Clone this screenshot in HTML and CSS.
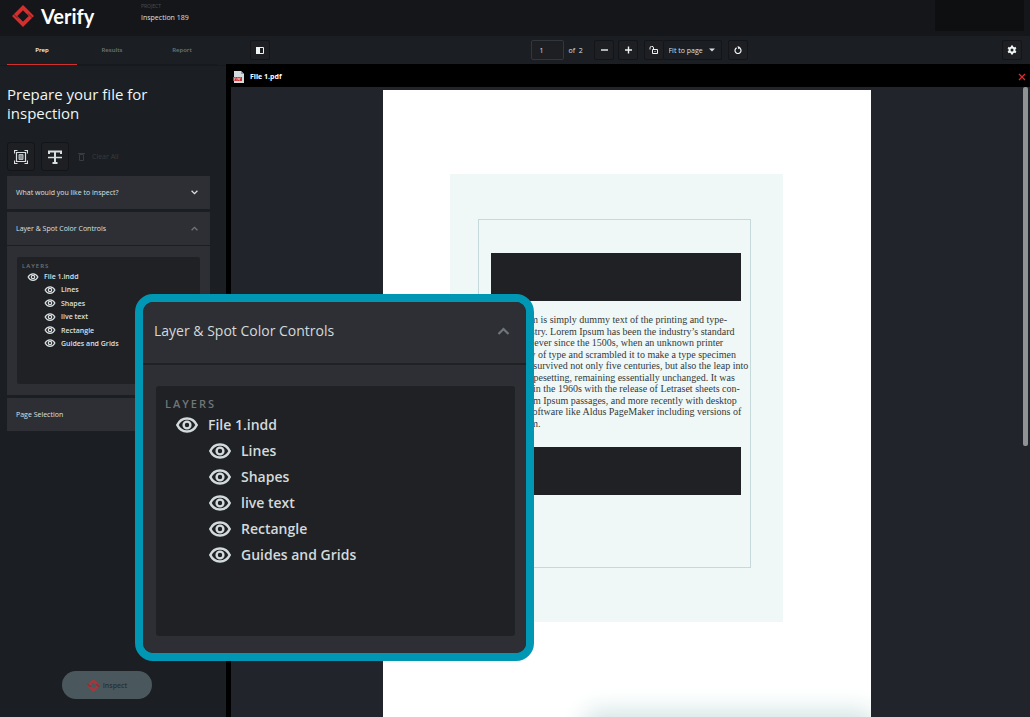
FILE: index.html
```html
<!DOCTYPE html>
<html lang="en">
<head>
<meta charset="utf-8">
<meta name="viewport" content="width=device-width, initial-scale=1">
<title>Verify</title>
<link rel="stylesheet" href="styles.css">
</head>
<body>
<svg class="defs" aria-hidden="true">
  <symbol id="eye" viewBox="0 0 22 16">
    <path d="M1.300 8C3.200 4 6.700 1.500 11 1.500S18.800 4 20.700 8C18.800 12 15.300 14.500 11 14.500S3.200 12 1.300 8Z" fill="none" stroke="currentColor" stroke-width="2.500"/>
    <circle cx="11" cy="8" r="3.400" fill="none" stroke="currentColor" stroke-width="2.400"/>
  </symbol>
  <symbol id="diamond" viewBox="0 0 22 22">
    <path d="M11 2.700 19.300 11 11 19.300 2.700 11Z" fill="none" stroke="currentColor" stroke-width="3.800"/>
    <path d="M1 8.500 6 13.500M16 8.500 21 13.500" stroke="#16171a" stroke-width="0.600"/>
  </symbol>
  <symbol id="up" viewBox="0 0 12 8"><path d="M1 7 6 2 11 7" fill="none" stroke="currentColor" stroke-width="2.200"/></symbol>
</svg>
<div class="app">
  <header class="header">
    <div class="brand"><svg class="brand-mark"><use href="#diamond"/></svg><span>Verify</span></div>
    <div class="project"><span class="project-label">PROJECT</span><span class="project-name">Inspection 189</span></div>
    <div class="account"></div>
  </header>

  <aside class="sidebar">
    <nav class="tabs">
      <a class="tab tab-active" href="#prep">Prep</a>
      <a class="tab" href="#results">Results</a>
      <a class="tab" href="#report">Report</a>
    </nav>
    <h1 class="title">Prepare your file for inspection</h1>
    <div class="tools">
      <button class="tool" aria-label="Select area">
        <svg viewBox="0 0 14 14" width="14" height="14" fill="none" stroke="currentColor"><path d="M.5 3.500V.5H3.500M10.500.5H13.500V3.500M13.500 10.500V13.500H10.500M3.500 13.500H.5V10.500" stroke-width="1.200"/><path d="M2.500 2.500H11.500V11.500H2.500Z" stroke-width="1.200"/><path d="M5 4.500H9V9.500H5Z" fill="#8d9496" stroke="#b4babb"/></svg>
      </button>
      <button class="tool" aria-label="Select text">
        <svg viewBox="0 0 14 14" width="14" height="14" fill="none" stroke="currentColor"><path d="M1 4V1.500H13V4M7 1.500V13M4.500 13H9.500" stroke-width="2"/><path d="M0 7.500H14" stroke-width="1.500"/></svg>
      </button>
      <button class="clear"><svg viewBox="0 0 7 9" width="7" height="9" fill="none" stroke="currentColor"><path d="M1.500 2.500H5.500V8.500H1.500ZM0 1.500H7"/></svg>Clear All</button>
    </div>

    <div class="accordion">
      <button class="fold">What would you like to inspect?<svg class="chevron chevron-down"><use href="#up"/></svg></button>
      <section class="fold-open">
        <button class="fold">Layer &amp; Spot Color Controls<svg class="chevron chevron-dim"><use href="#up"/></svg></button>
        <div class="fold-body">
          <div class="layers">
            <h2 class="layers-title">LAYERS</h2>
            <ul class="tree">
              <li class="node"><svg class="eye"><use href="#eye"/></svg>File 1.indd</li>
              <li class="node node-child"><svg class="eye"><use href="#eye"/></svg>Lines</li>
              <li class="node node-child"><svg class="eye"><use href="#eye"/></svg>Shapes</li>
              <li class="node node-child"><svg class="eye"><use href="#eye"/></svg>live text</li>
              <li class="node node-child"><svg class="eye"><use href="#eye"/></svg>Rectangle</li>
              <li class="node node-child"><svg class="eye"><use href="#eye"/></svg>Guides and Grids</li>
            </ul>
          </div>
        </div>
      </section>
      <button class="fold">Page Selection</button>
    </div>
    <button class="inspect"><svg class="inspect-mark"><use href="#diamond"/></svg>Inspect</button>
  </aside>

  <main class="main">
    <div class="toolbar">
      <button class="icon-button" aria-label="Toggle sidebar"><svg viewBox="0 0 8 7" width="8" height="7"><path d="M.5.5H7.500V6.500H.5Z" fill="none" stroke="currentColor"/><path d="M0 0H4V7H0Z" fill="currentColor"/></svg></button>
      <div class="controls">
        <label class="pager"><input class="page-input" type="text" value="1" aria-label="Page"><span>of&nbsp; 2</span></label>
        <div class="zoom-buttons">
          <button class="icon-button" aria-label="Zoom out"><svg viewBox="0 0 8 8" width="8" height="8"><path d="M1 4H8" stroke="currentColor" stroke-width="1.400"/></svg></button>
          <button class="icon-button" aria-label="Zoom in"><svg viewBox="0 0 8 8" width="8" height="8"><path d="M1 4H8M4.500.5V7.500" stroke="currentColor" stroke-width="1.400"/></svg></button>
        </div>
        <div class="fit">
          <button class="icon-button" aria-label="Unlock zoom"><svg viewBox="0 0 9 8" width="9" height="8" fill="none" stroke="currentColor"><path d="M3.500 3.500H8.500V7.500H3.500ZM4.500 3.500V2A1.700 1.700 0 0 0 1 2V3.500M5.500 5.500H6.500"/></svg></button>
          <div class="fit-box">
            <select class="fit-select" aria-label="Zoom level"><option>Fit to page</option></select>
            <svg class="caret" viewBox="0 0 6 4" width="6" height="4"><path d="M0 .5H6L3 3.500Z" fill="currentColor"/></svg>
          </div>
        </div>
        <button class="icon-button" aria-label="Rotate"><svg viewBox="0 0 8 8" width="8" height="8" fill="none" stroke="currentColor"><path d="M2.600 1.900A3 3 0 1 0 5.400 1.900" stroke-width="1.200"/><path d="M3.500 0 6.500 1.300 4.300 3.300Z" fill="currentColor" stroke="none"/></svg></button>
      </div>
      <button class="icon-button" aria-label="Settings"><svg viewBox="0 0 10 10" width="10" height="10" fill="none" stroke="currentColor"><circle cx="5" cy="5" r="2.500" stroke-width="2"/><path d="M5 .5V2M5 8V9.500M1.100 2.700 2.400 3.500M7.600 6.500 8.900 7.300M1.100 7.300 2.400 6.500M7.600 3.500 8.900 2.700" stroke-width="2"/></svg></button>
    </div>
    <div class="filebar">
      <svg class="pdf" viewBox="0 0 11 12" width="11" height="12"><path d="M1 0H8L11 3V12H1Z" fill="#d3dde0"/><path d="M8 0V3H11" fill="#8fa0a6"/><path d="M0 6H9V10H0Z" fill="#cf2f31"/><path d="M1.500 9.500V7H3M4 9.500V7H5.500V9M6.500 9.500V7H8" fill="none" stroke="#e9b9ba" stroke-width="0.700"/></svg>
      <span class="filename">File 1.pdf</span>
      <button class="close" aria-label="Close file"><svg viewBox="0 0 8 8" width="8" height="8"><path d="M1 1 7 7M7 1 1 7" stroke="#d9302f" stroke-width="1.300"/></svg></button>
    </div>
    <div class="viewer">
      <article class="sheet">
        <div class="bleed">
          <div class="frame">
            <div class="block"></div>
            <p class="copy">
              <span>Lorem Ipsum is simply dummy text of the printing and type-</span>
              <span>setting industry. Lorem Ipsum has been the industry’s standard</span>
              <span>dummy text ever since the 1500s, when an unknown printer</span>
              <span>took a galley of type and scrambled it to make a type specimen</span>
              <span>book. It has survived not only five centuries, but also the leap into</span>
              <span>electronic typesetting, remaining essentially unchanged. It was</span>
              <span>popularised in the 1960s with the release of Letraset sheets con-</span>
              <span>taining Lorem Ipsum passages, and more recently with desktop</span>
              <span>publishing software like Aldus PageMaker including versions of</span>
              <span>Lorem Ipsum.</span>
            </p>
            <div class="block"></div>
          </div>
        </div>
        <div class="glow"></div>
      </article>
      <div class="scrollbar"></div>
    </div>
  </main>

  <section class="lens">
    <button class="fold">Layer &amp; Spot Color Controls<svg class="chevron chevron-dim"><use href="#up"/></svg></button>
    <div class="fold-body">
      <div class="layers">
        <h2 class="layers-title">LAYERS</h2>
        <ul class="tree">
          <li class="node"><svg class="eye"><use href="#eye"/></svg>File 1.indd</li>
          <li class="node node-child"><svg class="eye"><use href="#eye"/></svg>Lines</li>
          <li class="node node-child"><svg class="eye"><use href="#eye"/></svg>Shapes</li>
          <li class="node node-child"><svg class="eye"><use href="#eye"/></svg>live text</li>
          <li class="node node-child"><svg class="eye"><use href="#eye"/></svg>Rectangle</li>
          <li class="node node-child"><svg class="eye"><use href="#eye"/></svg>Guides and Grids</li>
        </ul>
      </div>
    </div>
  </section>
</div>
</body>
</html>
```

FILE: styles.css
```css
* { box-sizing: border-box; }
body { margin: 0; background: #1b1e22; color: #d9e0e1; font: 7px/13px "Open Sans", "Noto Sans", sans-serif; }
button, input, select { font: inherit; color: inherit; margin: 0; }
button { padding: 0; border: 0; background: none; cursor: pointer; }
svg { display: block; flex: none; }
.defs { position: absolute; width: 0; height: 0; }

.app { position: relative; height: 100vh; overflow: hidden; display: grid; grid-template-columns: 226px 1fr; grid-template-rows: 36px minmax(0, 1fr); }

.header { grid-column: 1 / -1; display: flex; background: #151619; }
.brand { width: 129px; padding: 0 0 4px 12px; display: flex; align-items: center; gap: 7px; color: #fff; font: 700 20px/24px Lato, sans-serif; }
.brand-mark { width: 22px; height: 24px; color: #d32f2f; }
.project { flex: 1; padding: 3px 0 0 12px; display: flex; flex-direction: column; }
.project-label { color: #4b5154; font-size: 5px; line-height: 6px; }
.project-name { line-height: 17px; font-size: 7px; }
.account { width: 89px; height: 31px; margin-right: 6px; background: #0e0f11; }

.sidebar { display: flex; flex-direction: column; min-height: 0; background: #1b1e22; }
.tabs { display: flex; height: 30px; padding-left: 7px; border-bottom: 1px solid #17191c; }
.tab { width: 70px; height: 29px; border-bottom: 1px solid #17191c; color: #69777b; font-size: 6px; line-height: 29px; font-weight: 600; text-align: center; text-decoration: none; }
.tab-active { border-color: #d32f2f; color: #fff; }
.title { margin: 19px 40px 0 7px; font-size: 15px; line-height: 19px; font-weight: 500; color: #eef6f6; }
.tools { display: flex; align-items: center; gap: 6px; padding: 19px 0 5px 7px; }
.tool { width: 28px; height: 29px; display: grid; place-items: center; border: 1px solid #131518; border-radius: 3px; background: #1d1f23; color: #d9e0e1; }
.clear { display: flex; align-items: center; gap: 7px; margin-left: 3px; color: #383b3f; }

.accordion { margin: 0 16px 0 7px; display: flex; flex-direction: column; gap: 3px; }
.fold { width: 100%; height: 33px; padding: 0 12px 0 9px; display: flex; align-items: center; justify-content: space-between; background: #2e2f34; text-align: left; }
.chevron { width: 7px; height: 5px; }
.chevron-down { transform: rotate(180deg); }
.chevron-dim { color: #6f7678; }
.fold-body { margin-top: 1px; padding: 11px 10px; background: #2e2f34; }
.layers { height: 127px; padding: 5px; background: #202125; border-radius: 2px; }
.layers-title { margin: 0; color: #6f7678; font-size: 6px; line-height: 8px; font-weight: 600; letter-spacing: 1px; }
.tree { height: 80px; margin: 0; padding: 0; display: flex; flex-direction: column; justify-content: space-between; list-style: none; font-weight: 600; }
.node { display: flex; align-items: center; gap: 5px; padding-left: 5px; }
.node-child { padding-left: 22px; }
.eye { width: 12px; height: 8px; }
.inspect { width: 90px; height: 28px; margin: auto 0 18px 62px; display: flex; align-items: center; justify-content: center; gap: 3px; border-radius: 14px; background: #4a585e; color: #283034; font-size: 7px; font-weight: 600; }
.inspect-mark { width: 13px; height: 13px; color: #a03a3e; }

.main { display: flex; flex-direction: column; min-width: 0; min-height: 0; background: #000; }
.toolbar { height: 28px; flex: none; padding: 0 8px 0 24px; display: flex; align-items: center; justify-content: space-between; background: #1b1e22; }
.icon-button { width: 20px; height: 20px; display: grid; place-items: center; border: 1px solid #131518; border-radius: 2px; background: #1d1f23; color: #eef3f3; }
.controls { display: flex; align-items: center; gap: 6px; padding-left: 6px; }
.pager { display: flex; align-items: center; gap: 5px; width: 57px; }
.page-input { width: 33px; height: 20px; padding: 0 8px; border: 1px solid #33363a; border-radius: 2px; background: #1d1f23; }
.zoom-buttons { display: flex; gap: 4px; }
.fit { display: flex; }
.fit-box { position: relative; display: flex; align-items: center; }
.fit-select { width: 58px; height: 20px; padding: 0 0 0 5px; appearance: none; border: 1px solid #131518; border-left: 0; border-radius: 2px; background: #1b1e22; }
.caret { position: absolute; right: 7px; pointer-events: none; }
.filebar { height: 23px; flex: none; display: flex; align-items: center; padding: 2px 4px 0 7px; }
.filename { margin-left: 6px; font-weight: 700; color: #fff; }
.close { margin-left: auto; }

.viewer { position: relative; flex: 1; min-height: 0; margin-left: 5px; padding: 3px 7px 0 0; overflow: hidden; display: flex; justify-content: center; background: #22242c; }
.sheet { position: relative; width: 100%; max-width: 488px; padding: 84px 88px 0 67px; overflow: hidden; background: #fff; }
.bleed { padding: 45px 32px 54px 28px; background: #eff8f6; }
.frame { padding: 33px 9px 72px 12px; display: flex; flex-direction: column; align-items: center; border: 1px solid #c5d8da; }
.block { width: 100%; height: 48px; background: #202125; }
.copy { width: max-content; height: 115px; margin: 13px 0 18px; display: flex; flex-direction: column; justify-content: space-between; color: #34383c; font: 10px/11px "Liberation Serif", serif; white-space: nowrap; }
.glow { position: absolute; top: 100%; left: 206px; right: 0; height: 40px; border-radius: 10px; box-shadow: 0 0 24px 6px #cfe3e2; }
.scrollbar { position: absolute; top: 0; right: 2px; width: 5px; height: 57%; border-radius: 2px; background: #8f9394; }

.lens { position: absolute; left: 135px; top: 294px; width: 399px; border: 8px solid #0097b5; border-radius: 18px; overflow: hidden; background: #202125; font-size: 14px; line-height: 26px; color: #d3dadb; }
.lens .fold { height: 61px; padding: 0 16px 4px 11px; }
.lens .chevron { width: 13px; height: 8px; }
.lens .fold-body { margin-top: 2px; padding: 21px 11px 17px 13px; }
.lens .layers { height: 250px; padding: 9px; border-radius: 3px; }
.lens .layers-title { font-size: 11px; line-height: 17px; letter-spacing: 2px; }
.lens .tree { height: auto; }
.lens .node { padding-left: 11px; gap: 10px; }
.lens .node-child { padding-left: 44px; }
.lens .eye { width: 22px; height: 16px; }
```
